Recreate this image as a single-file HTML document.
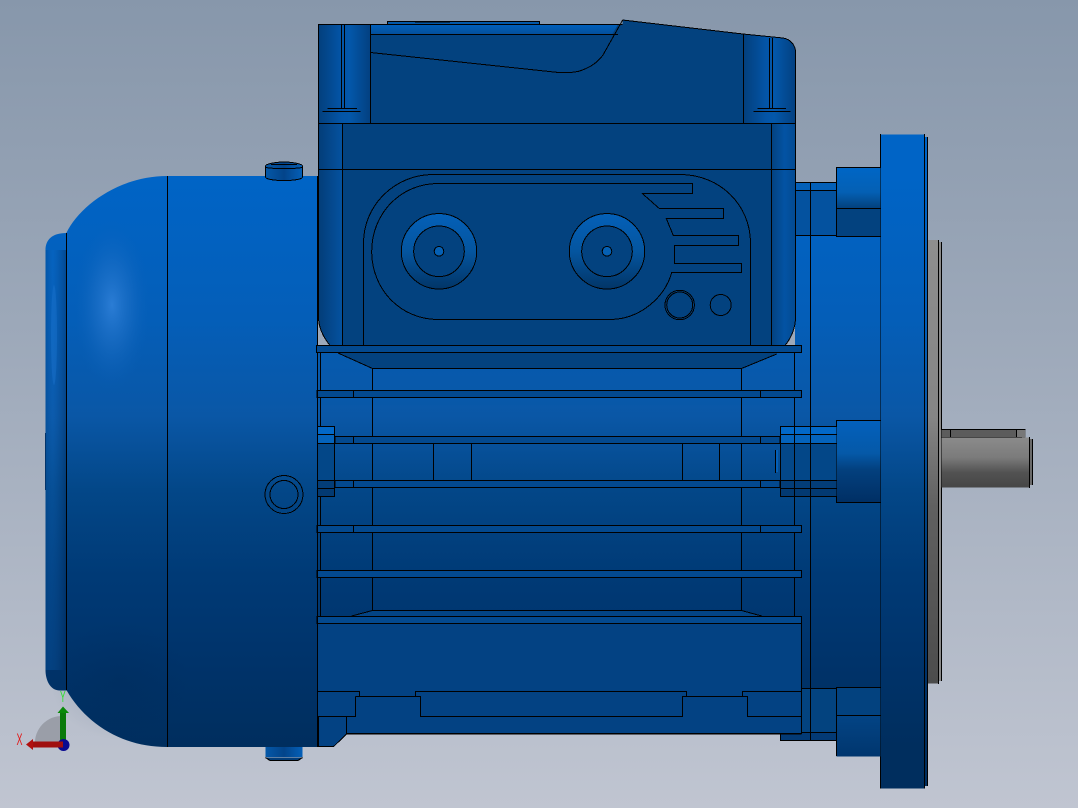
<!DOCTYPE html>
<html><head><meta charset="utf-8"><style>html,body{margin:0;padding:0;width:1078px;height:808px;overflow:hidden;background:#a5aebd}svg{display:block}[stroke="#000"]{shape-rendering:crispEdges}</style></head><body>
<svg xmlns="http://www.w3.org/2000/svg" width="1078" height="808" viewBox="0 0 1078 808">
<defs>
<linearGradient id="bg" x1="0" y1="0" x2="0" y2="1"><stop offset="0" stop-color="#8797ab"/><stop offset=".4" stop-color="#9ca8b9"/><stop offset="1" stop-color="#c0c5d1"/></linearGradient>
<linearGradient id="m" gradientUnits="userSpaceOnUse" x1="0" y1="176" x2="0" y2="747"><stop offset="0" stop-color="#0064c6"/><stop offset=".25" stop-color="#045eb8"/><stop offset=".42" stop-color="#0a57a6"/><stop offset=".55" stop-color="#034788"/><stop offset=".7" stop-color="#003a76"/><stop offset=".85" stop-color="#00336a"/><stop offset="1" stop-color="#002e5e"/></linearGradient>
<linearGradient id="cap" x1="0" y1="0" x2="1" y2="0"><stop offset="0" stop-color="#034a90" stop-opacity=".5"/><stop offset=".35" stop-color="#1268c0" stop-opacity=".25"/><stop offset="1" stop-color="#002a5a" stop-opacity=".45"/></linearGradient>
<linearGradient id="col" x1="0" y1="0" x2="1" y2="0"><stop offset="0" stop-color="#033f7c"/><stop offset=".45" stop-color="#0355a8"/><stop offset=".6" stop-color="#0357aa"/><stop offset="1" stop-color="#034080"/></linearGradient>
<linearGradient id="colL" x1="0" y1="0" x2="1" y2="0"><stop offset="0" stop-color="#033d78"/><stop offset="1" stop-color="#0452a0"/></linearGradient>
<linearGradient id="colR" x1="0" y1="0" x2="1" y2="0"><stop offset="0" stop-color="#03427f"/><stop offset=".55" stop-color="#0353a4"/><stop offset="1" stop-color="#034a90"/></linearGradient>
<linearGradient id="top" x1="0" y1="0" x2="0" y2="1"><stop offset="0" stop-color="#0060bc"/><stop offset="1" stop-color="#044f9a"/></linearGradient>
<linearGradient id="lugT" x1="0" y1="0" x2="0" y2="1"><stop offset="0" stop-color="#0066c6"/><stop offset=".6" stop-color="#0460b4"/><stop offset="1" stop-color="#03407c"/></linearGradient>
<linearGradient id="lugM" x1="0" y1="0" x2="0" y2="1"><stop offset="0" stop-color="#0360bc"/><stop offset=".4" stop-color="#0559a8"/><stop offset=".6" stop-color="#03407e"/><stop offset="1" stop-color="#002f64"/></linearGradient>
<linearGradient id="lugB" x1="0" y1="0" x2="0" y2="1"><stop offset="0" stop-color="#034485"/><stop offset="1" stop-color="#00366e"/></linearGradient>
<linearGradient id="gray" gradientUnits="userSpaceOnUse" x1="0" y1="240" x2="0" y2="684"><stop offset="0" stop-color="#8e8e8e"/><stop offset=".4" stop-color="#858585"/><stop offset=".6" stop-color="#606060"/><stop offset="1" stop-color="#4c4c4c"/></linearGradient>
<linearGradient id="shaft" x1="0" y1="0" x2="0" y2="1"><stop offset="0" stop-color="#8b8b8b"/><stop offset=".4" stop-color="#7b7b7b"/><stop offset=".7" stop-color="#525252"/><stop offset="1" stop-color="#464646"/></linearGradient>
<linearGradient id="ring" x1="0" y1="0" x2="0" y2="1"><stop offset="0" stop-color="#0460b8"/><stop offset=".5" stop-color="#04559f"/><stop offset="1" stop-color="#023567"/></linearGradient>
<linearGradient id="bolt" x1="0" y1="0" x2="1" y2="0"><stop offset="0" stop-color="#0458a8"/><stop offset=".5" stop-color="#03448a"/><stop offset="1" stop-color="#0460b8"/></linearGradient>
<radialGradient id="hl" cx=".5" cy=".5" r=".5"><stop offset="0" stop-color="#2f80d8" stop-opacity=".9"/><stop offset=".5" stop-color="#2272c8" stop-opacity=".45"/><stop offset="1" stop-color="#0a60b8" stop-opacity="0"/></radialGradient>
<radialGradient id="dk" cx=".5" cy=".5" r=".5"><stop offset="0" stop-color="#001f44" stop-opacity=".15"/><stop offset="1" stop-color="#001f44" stop-opacity="0"/></radialGradient>
</defs>
<rect width="1078" height="808" fill="url(#bg)"/>

<!-- gray plate and shaft -->
<rect x="927.5" y="240" width="11.5" height="443.5" fill="url(#gray)"/>
<rect x="938.5" y="242" width="3" height="439" fill="#8a8a8a"/>
<path d="M938.5 240V684M941.5 242V681" stroke="#000" fill="none"/>
<rect x="941.5" y="429.5" width="84" height="8" fill="#5c5c5c"/>
<rect x="1016" y="430" width="9" height="7" fill="#777"/>
<path d="M941.5 429.5H1025.5M941.5 437.5H1022M950.5 429.5V437.5M1016.5 429.5V437.5" stroke="#000" fill="none"/>
<rect x="941.5" y="437.5" width="88" height="50" fill="url(#shaft)"/>
<rect x="1029.5" y="439" width="3" height="46" fill="#6a6a6a"/>
<path d="M1029.5 437V488M1032.5 439V485" stroke="#000" fill="none"/>

<!-- flange -->
<rect x="880.5" y="134.5" width="44" height="654" fill="url(#m)"/>
<rect x="924.5" y="137" width="3" height="649" fill="url(#m)"/>
<path d="M880.5 134V788.5M924.5 134V788.5M927.5 137V786" stroke="#000" fill="none"/>

<!-- drive end body -->
<rect x="795" y="235" width="85.5" height="454" fill="url(#m)"/>
<path d="M810.5 182V740" stroke="#000" fill="none"/>
<path d="M794.5 352V616" stroke="#000" fill="none"/>

<!-- upper collars -->
<rect x="795.5" y="182.5" width="41" height="53" fill="#04529f"/>
<rect x="795.5" y="182.5" width="41" height="8" fill="#0460b8"/>
<path d="M795.5 190.5H836.5M795.5 235.5H836.5M795.5 182.5H836.5M810.5 182V236" stroke="#000" fill="none"/>
<rect x="836.5" y="167.5" width="44" height="41" fill="url(#lugT)"/>
<rect x="836.5" y="208.5" width="44" height="28" fill="#03427f"/>
<path d="M836.5 167V236.5H880.5M836.5 208.5H880.5M836.5 167.5H880.5" stroke="#000" fill="none"/>

<!-- middle lug -->
<rect x="836.5" y="420.5" width="44" height="82" fill="url(#lugM)"/>
<path d="M836.5 420.5H880.5M836.5 420V502.5H880.5" stroke="#000" fill="none"/>

<!-- lower collars -->
<rect x="801.5" y="688.5" width="35" height="44" fill="#03437f"/>
<rect x="780.5" y="732.5" width="56" height="8" fill="#033a75"/>
<path d="M801.5 688.5H836.5M801.5 732.5H836.5M780.5 732.5V740.5H836.5M810.5 688V740" stroke="#000" fill="none"/>
<rect x="836.5" y="687.5" width="44" height="28" fill="#03427f"/>
<rect x="836.5" y="715.5" width="44" height="41" fill="url(#lugB)"/>
<path d="M836.5 687.5H880.5M836.5 715.5H880.5M836.5 687V756" stroke="#000" fill="none"/>

<!-- motor body dome -->
<path d="M66.3 233C80 205 120 176 167 176H318V747H167C120 747 85 722 66.7 690.5H60C50 690.5 45.5 680 45.5 670V250C45.5 240 52 233 66.3 233Z" fill="url(#m)"/>
<ellipse cx="112" cy="305" rx="38" ry="85" fill="url(#hl)"/>
<ellipse cx="120" cy="680" rx="70" ry="60" fill="url(#dk)"/>
<rect x="45.5" y="250" width="21" height="420" fill="url(#cap)"/>
<ellipse cx="54" cy="335" rx="3" ry="50" fill="#1f76cf" opacity=".4"/>
<path d="M66.5 233V690M167.5 176V747" stroke="#000" fill="none"/>
<path d="M45.5 433V490" stroke="#03346a" fill="none"/>

<!-- bolts -->
<ellipse cx="284" cy="166" rx="14" ry="3" fill="#0360bc" stroke="#000"/>
<path d="M265.5 166C265.5 164 275 162 284 162S302.5 164 302.5 166V177C302.5 179 295 180.5 284 180.5S265.5 179 265.5 177Z" fill="url(#bolt)" stroke="#000"/>
<path d="M265.5 167.5C275 169 293 169 302.5 167.5M271 164.5H297" stroke="#000" fill="none"/>
<rect x="265.5" y="747" width="37" height="10" fill="url(#bolt)"/>
<path d="M265.5 757.5L270 760.5H298L302.5 757.5" fill="#023c78" stroke="#000"/>
<circle cx="284" cy="494.5" r="19" fill="none" stroke="#000"/>
<circle cx="284" cy="494.5" r="14" fill="none" stroke="#000"/>

<!-- fin zone -->
<rect x="317" y="345" width="478" height="272" fill="url(#m)"/>
<rect x="317" y="345" width="478" height="60" fill="#0a58a8" opacity=".35"/>
<path d="M320.5 352V616M372.5 368V610.5M741.5 368V610.5M794.5 352V616" stroke="#000" fill="none"/>
<path d="M338 353L372.5 368.5H741.5L776.7 354V352H338Z" fill="#03427f"/>
<path d="M338 353L372.5 368.5H741.5L776.7 354" stroke="#000" fill="none"/>
<path d="M372.5 610.5H741.5L761.7 616H351.7Z" fill="#034485"/>
<path d="M351.7 616L372.5 610.5H741.5L761.7 616" stroke="#000" fill="none"/>
<!-- windows -->
<path d="M433.5 443.5V480.5H335M335 443.5H433.5M471.5 443.5H682.5V480.5H471.5ZM780.5 443.5H719.5V480.5H780.5" stroke="#000" fill="none"/>
<!-- fins -->
<g fill="#03498f" stroke="#000">
<rect x="317" y="390.5" width="484.5" height="7"/>
<rect x="335" y="436.5" width="445" height="7"/>
<rect x="335" y="480.5" width="445" height="7"/>
<rect x="317" y="525.5" width="484.5" height="7"/>
<rect x="317" y="570.5" width="484.5" height="7"/>
<rect x="317" y="616.5" width="484.5" height="7"/>
</g>
<path d="M353.5 390.5V397.5M760.5 390.5V397.5M353.5 436.5V443.5M760.5 436.5V443.5M353.5 480.5V487.5M760.5 480.5V487.5M353.5 525.5V532.5M760.5 525.5V532.5" stroke="#000" fill="none"/>
<!-- side tabs -->
<rect x="317" y="426.5" width="17.5" height="8" fill="#0268c8"/>
<rect x="317" y="434.5" width="17.5" height="9" fill="#0463bc"/>
<rect x="317" y="443.5" width="17.5" height="37" fill="#034788"/>
<rect x="317" y="480.5" width="17.5" height="8" fill="#033d78"/>
<rect x="317" y="488.5" width="17.5" height="8" fill="#033a72"/>
<path d="M317 426.5H334.5V496.5H317M317 434.5H334.5M317 443.5H334.5M317 480.5H334.5M317 488.5H334.5" stroke="#000" fill="none"/>
<rect x="780.5" y="426.5" width="56" height="8" fill="#0268c8"/>
<rect x="780.5" y="434.5" width="56" height="9" fill="#0463bc"/>
<rect x="780.5" y="443.5" width="56" height="37" fill="#034788"/>
<rect x="780.5" y="480.5" width="56" height="8" fill="#033d78"/>
<rect x="780.5" y="488.5" width="56" height="8" fill="#033a72"/>
<path d="M836.5 426.5H780.5V497M780.5 434.5H836.5M780.5 443.5H836.5M780.5 480.5H836.5M780.5 488.5H836.5M780.5 496.5H836.5M810.5 426V497M794.5 426V497" stroke="#000" fill="none"/>
<rect x="775" y="450" width="3" height="22" fill="#0460b8"/>
<path d="M775.5 450V473" stroke="#000" fill="none"/>

<!-- lower box -->
<rect x="317" y="623.5" width="484.5" height="110" fill="#034283"/>
<path d="M317 623.5H801.5V733.5H346.5" fill="none" stroke="#000"/>
<path d="M317 691.5H359.5V696.5M355.5 696.5H420.5V716.5H682.5V696.5H747.5V716.5H801.5M317 716.5H355.5V696.5M415.5 696.5V691.5H686.5V696.5M742.5 696.5V691.5H801.5" fill="none" stroke="#000"/>
<path d="M318.5 716.5H346.5V734L333.7 746.5H318.5Z" fill="#034283" stroke="#000"/>
<path d="M346 733.5H801.5" stroke="#000" stroke-width="1.5"/>
<path d="M317.5 176V747" stroke="#000" fill="none"/>

<!-- terminal box -->
<path d="M318.5 24.5H622.5L623 19.5L743 34L783 38C790 39 795.5 45 795.5 52V317C795.5 328 791 338 785 345.5H330C324 338 318.5 328 318.5 317Z" fill="#03427f"/>
<path d="M318.5 24.5H370.5V123.5H318.5Z" fill="url(#col)"/>
<path d="M743.5 34L783 38C790 39 795.5 45 795.5 52V123.5H743.5Z" fill="url(#col)"/>
<path d="M318.5 123.5H342.5V345.5H330C324 338 318.5 328 318.5 317Z" fill="url(#colL)"/>
<path d="M771.5 123.5H795.5V317C795.5 328 791 338 785 345.5H771.5Z" fill="url(#colR)"/>
<path d="M370.5 24.5H618L612 34.5H370.5Z" fill="url(#top)"/>
<rect x="387.5" y="21.5" width="152" height="3" fill="#0358a8" stroke="#000"/>
<path d="M415 21.5H450" stroke="#000" stroke-width="1.5"/>
<path d="M618 34.5H370.5" stroke="#000" fill="none"/>
<path d="M622.5 24.5H318.5V317C318.5 328 324 338 330 345.5M622.5 20L743 34L783 38C790 39 795.5 45 795.5 52V317C795.5 328 791 338 785 345.5" fill="none" stroke="#000"/>
<path d="M370.5 24.5V123.5M743.5 34V123.5M318.5 123.5H795.5M318.5 169.5H795.5M342.5 123.5V345M771.5 123.5V345" fill="none" stroke="#000"/>
<path d="M370.5 52.5L556.7 72.3C565 73 573 72.5 578 71.5C590 68 598 62 603 55L622.7 20" fill="none" stroke="#000"/>
<path d="M341.5 24.5V108.5M344.5 24.5V108.5M327.5 108.5H357M322.5 111.5H360.5M769.5 38V108.5M772.5 38V108.5M757.5 108.5H786M753.5 111.5H790.5" fill="none" stroke="#000"/>
<!-- panel -->
<path d="M363.5 345V243C363.5 205 395 174.5 433 174.5H680C720 174.5 750.5 205 750.5 243V345" fill="none" stroke="#000"/>
<path d="M438.3 183.5H692.5V193.5H642.3L659.3 208.5H723.5V218.5H666.3L673.3 235.5H738.5V245.5H674.5V263.5H741.5V272.5H671.7C665 297 640 319.5 610 319.5H438.3C400 319.5 371.7 289 371.7 251.4C371.7 214 400 183.5 438.3 183.5Z" fill="#03427f" stroke="#000"/>
<g stroke="#000">
<circle cx="439" cy="251.3" r="37.7" fill="url(#ring)"/>
<circle cx="439" cy="251.3" r="25.3" fill="#03427f"/>
<circle cx="439" cy="251.3" r="4.8" fill="#0560b4"/>
<circle cx="607" cy="251.3" r="37.7" fill="url(#ring)"/>
<circle cx="607" cy="251.3" r="25.3" fill="#03427f"/>
<circle cx="607" cy="251.3" r="4.8" fill="#0560b4"/>
<circle cx="679.7" cy="305" r="14.7" fill="none"/>
<circle cx="679.7" cy="305" r="13" fill="none"/>
<circle cx="720.7" cy="305" r="10.5" fill="none"/>
</g>
<rect x="316.5" y="345.5" width="485" height="7" fill="#03498f" stroke="#000"/>

<!-- triad -->
<path d="M35 745A27 27 0 0 1 63 716V745Z" fill="#9a9ea8"/>
<text transform="translate(16.5 745) scale(.75 1.35)" font-family="Liberation Sans, sans-serif" font-size="12" fill="#e01a1a">X</text>
<text transform="translate(60 702) scale(.85 1.6)" font-family="Liberation Sans, sans-serif" font-size="10" fill="#2ee02e">Y</text>
<rect x="60" y="713" width="6" height="32" fill="#0a7a0a"/>
<path d="M57.5 713L63 706.5L69 713Z" fill="#0a8a0a"/>
<circle cx="63.5" cy="745" r="6" fill="#0a0a90"/>
<rect x="33" y="741.5" width="30" height="6" fill="#a00f0f"/>
<path d="M33 739L26 744.5L33 750Z" fill="#b01010"/>
</svg>
</body></html>
